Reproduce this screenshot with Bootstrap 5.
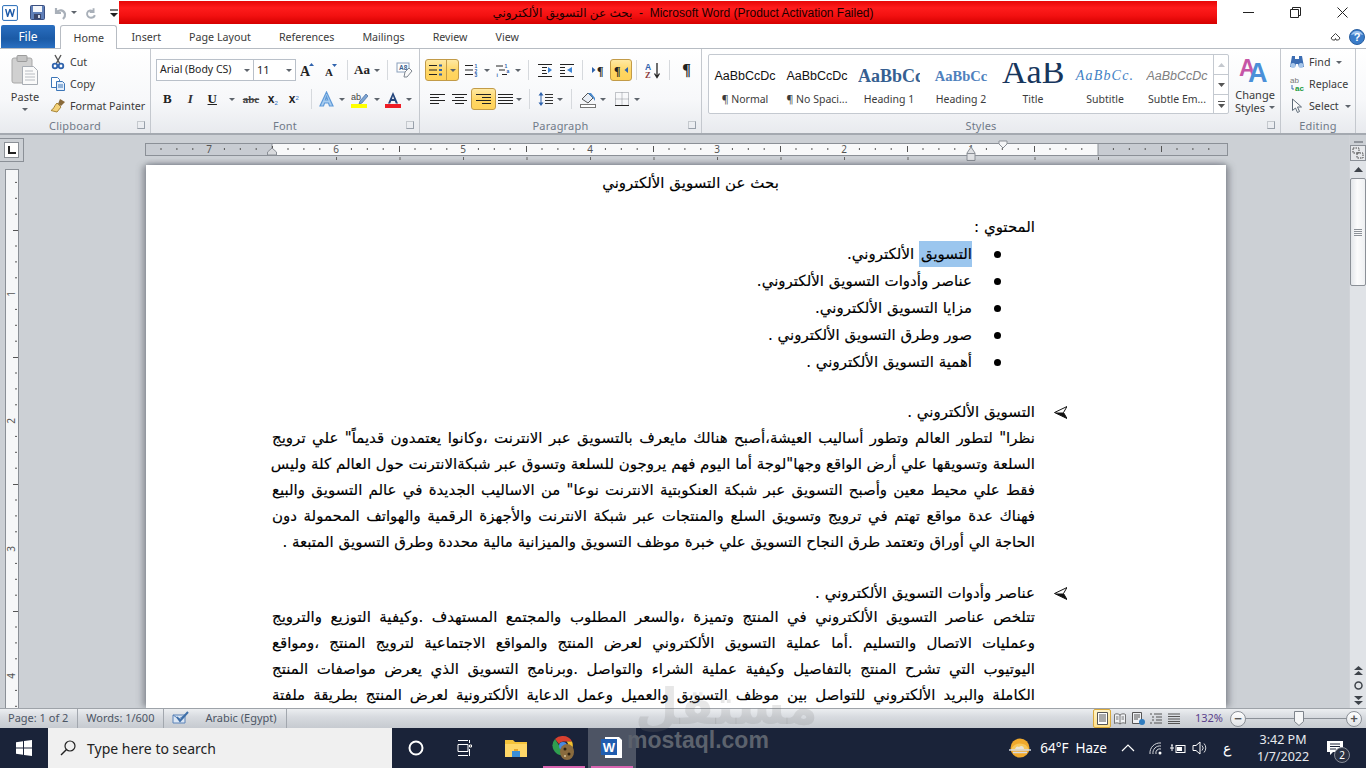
<!DOCTYPE html>
<html lang="en">
<head>
<meta charset="utf-8">
<title>Word</title>
<link href="https://cdn.jsdelivr.net/npm/bootstrap@5.3.0/dist/css/bootstrap.min.css" rel="stylesheet">
<style>
html,body{margin:0;height:768px;width:1366px;overflow:hidden;background:#fff}
body{font-family:"Noto Sans","Open Sans",sans-serif;font-size:11px;color:#3b3b3b;position:relative}
svg{display:block;flex:none}
.titlebar{height:25px;background:#fff}
.qat{width:119px;padding-left:2px}
.qsep{width:1px;height:15px;background:#9aa0a8}
.redbar{width:1098px;height:23px;margin-top:1px;padding-left:30px;background:linear-gradient(#e60808,#ff1c1c 30%,#f21010 65%,#d50000);color:#1a0000;font:12px "Liberation Sans","DejaVu Sans",sans-serif}
.wctl{flex:1;padding:0 18px 0 26px}
.tabrow{height:24px;border-bottom:1px solid #b7bcc3}
.filetab{width:54px;height:23px;margin:0 5px 0 1px;background:linear-gradient(#2a6fc0,#1b5aa6 60%,#2a70c2);color:#fff;font-size:12px;border-radius:2px 2px 0 0}
.wtab{padding:0 14px;height:24px;font-size:10.7px}
.wtab.on{background:#fff;border:1px solid #b7bcc3;border-bottom:0;border-radius:3px 3px 0 0;padding:0 12.5px;height:25px}
.helpbox{margin-left:auto;padding-right:1px}
.ribbon{height:86px;background:linear-gradient(#fff,#f7f8fa 60%,#e8eaee);border-bottom:2px solid #a4a9b0}
.rgroup{height:84px;border-right:1px solid #c4c8ce;padding-top:5px;position:relative}
.gl{position:absolute;left:0;right:0;top:69px;text-align:center;color:#707a88;font-size:11px;line-height:15px;letter-spacing:.2px}
.gl-st{padding-right:20px}
.launch{position:absolute;right:5px;top:72px;width:8px;height:8px;border:1px solid #98a0aa;border-top-color:#c5c9ce;border-left-color:#c5c9ce}
.g1{width:151px}.g2{width:269px}.g3{width:282px}.g4{width:579px}.g5{width:75px}
.paste{width:50px;padding-top:1px}
.pl{margin-top:4px;line-height:14px}
.caret-d{width:0;height:0;border-left:3px solid transparent;border-right:3px solid transparent;border-top:3px solid #5e646c}
.smallcol{margin-top:-3px}
.smallrow{height:22px;gap:2px;white-space:nowrap;font-size:10.7px}
.smallrow svg{margin-right:2px}
.combo{height:22px;background:#fff;border:1px solid #b9c0c9;color:#222;font-size:10.5px;padding:0 3px}
.c1{width:98px}.c2{width:43px;margin-left:-1px;font-size:11px}
.cell{height:22px;min-width:0}
.grid-f1{display:grid;grid-template-columns:98px 42px 22px 26px 6px 34px 6px 29px;align-items:center;margin:5px 0 0 5px;height:22px}
.grid-f2{display:grid;grid-template-columns:22.5px 23.5px 20.5px 18px 21px 22.5px 19.5px 16px 14.5px 16.5px 17.5px 17px 16.5px 15.5px;margin:7px 0 0 5px;height:22px}
.grid-p1{display:grid;grid-template-columns:35px 23px 8px 24px 6px 14px 20px 23px 8px 24px 22px 8px 25px 8px 27px;margin:5px 0 0 5px;height:22px}
.grid-p2{display:grid;grid-template-columns:22px 23px 25px 18px 10px 10px 3px 18px 9px 14px 20px 10px 4px 20px 10px;margin:7px 0 0 6px;height:22px}
.hot{background:linear-gradient(#ffe9a3,#ffd663 55%,#ffd25a);border:1px solid #c29b48;border-radius:3px}
.splitbtn{width:34px;height:22px;overflow:hidden}
.splitbtn>div{height:100%}
.splitbtn .sa{width:21px;border-right:1px solid #c29b48}
.splitbtn .sb{flex:1}
.vsep{width:1px;height:20px;background:#d6d9dd}
.fb{font:700 13px "Liberation Serif",serif;color:#222}
.fi{font:italic 700 13px "Liberation Serif",serif;color:#333}
.fu{font:700 13px "Liberation Serif",serif;color:#222;text-decoration:underline}
.fs{font:700 11px "Liberation Serif",serif;color:#444;text-decoration:line-through}
.fx{font:700 12px "Liberation Sans",sans-serif;color:#222}
.fx sub,.fx sup{font-size:6px;color:#2b6fc0;font-weight:400}
.gallery{width:522px;height:60px;margin-left:6px;background:#fff;border:1px solid #c4c9d0;border-radius:2px}
.sty{width:72px;height:58px;overflow:hidden;text-align:center}
.spv{height:34px;width:62px;margin:0 auto;overflow:hidden;white-space:nowrap;color:#111}
.slb{font-size:10.5px;line-height:14px;margin-top:3px;white-space:nowrap}
.s0{font:12.5px/42px "Liberation Sans",sans-serif}
.s1{font:700 18px/42px "Liberation Serif",serif;color:#365f91}
.s2{font:700 14.5px/42px "Liberation Serif",serif;color:#4f81bd}
.s3{font:34px/17px "Liberation Serif",serif;color:#17365d;height:26px;margin-top:8px}
.s4{font:italic 14px/42px "Liberation Serif",serif;color:#3f7fc4;letter-spacing:1.2px}
.s5{font:italic 12.5px/42px "Liberation Sans",sans-serif;color:#808080}
.sroll{width:15px;margin-left:auto;border-left:1px solid #c4c9d0}
.sroll>div{height:20px;border-bottom:1px solid #c4c9d0}
.sroll>div:last-child{border-bottom:0;flex:1}
.chg{width:50px;margin-left:1px;text-align:center;line-height:13px}
.chg svg{margin:0 auto 4px}
.workspace{height:573px;background:#ccd0d5}
.vcol{width:24px}
.tabsel{width:24px;height:24px;margin-top:3px;border:1px solid #8b9097;border-left:0;padding:3px 4px 3px 4px}
.tabsel>div{background:#fff;border:1px solid #8b9097;height:100%}
.vrul{margin:7px 0 0 5px}
.midcol{width:1325px;padding-left:121px;overflow:hidden}
.pagewrap{padding-top:4px;height:100%}
.docpage{width:1080px;height:543px;margin-left:1px;background:#fff;box-shadow:-5px 0 6px -1px rgba(90,95,105,.45),5px 0 6px -1px rgba(90,95,105,.45),0 -2px 4px rgba(90,95,105,.35);padding:5px 191px 0 126px;color:#000;font:15px/26px "DejaVu Sans",sans-serif;direction:rtl;-webkit-text-stroke:.15px #000}
.doctitle{text-align:center;padding-left:74px;margin-bottom:18px}
.l27{line-height:27px}
.bulrow{display:flex}
.bulrow .mk{width:63px;flex:none;display:flex;align-items:center}
.dotb{width:7px;height:7px;border-radius:50%;background:#000;margin-right:34px}
.sel{background:#9bc6ee;display:inline-block;line-height:26px;padding-left:2px}
.hdrow{display:flex;margin-right:-32px}
.hdrow .mk{width:32px;flex:none;display:flex;align-items:center}
.just{text-align:justify;text-align-last:justify;white-space:nowrap}
.tight{margin-top:-2px}
.m23{margin-top:23px}.m25{margin-top:25px}
.sbar{width:17px;background:#e0e3e7;border-left:1px solid #d0d3d8}
.sbtop{height:10px;background:#ccd0d5;padding-top:6px}
.sbtop i{display:block;width:9px;height:2px;margin:0 auto;background:#90959c}
.sbv{width:16px;height:16px;background:#e6e8eb;border:1px solid #8b9097}
.sup{height:17px}
.thumb{height:108px;background:linear-gradient(90deg,#e3e6ea,#fbfbfc 45%,#eef0f2);border:1px solid #8b9097;border-radius:2px;width:16px}
.sbbot{margin-top:auto;gap:6px;padding-bottom:3px}
.status{height:20px;background:linear-gradient(#eceef1,#d8dbe0 40%,#c6cad0);border-top:1px solid #9ea3a9;color:#4c5564;font-size:11px}
.st{padding:0 9px 0 8px;height:19px;border-right:1px solid #a2a7ae;white-space:nowrap}
.vw{width:18px;height:19px}
.vw.on{background:linear-gradient(#fff3c8,#ffe08a);border:1px solid #d9a93c;border-radius:2px}
.zoomtxt{color:#5a3f8c;width:42px;text-align:center;margin-left:5px}
.zb{width:16px;height:16px;border-radius:50%;border:1px solid #8b9097;background:linear-gradient(#fff,#dfe2e6);font:700 13px/13px "Liberation Sans",sans-serif;text-align:center;color:#555}
.ztrack{width:102px;height:1px;background:#8b9097;position:relative;margin:0 -1px}
.zthumb{position:absolute;left:49px;top:-7px}
.taskbar{height:40px;background:#1a2339;color:#fff}
.startb{width:48px}
.searchb{width:344px;height:40px;background:#f0f0f0;color:#222;font-size:14px;padding-left:12px;gap:11px}
.tbi{width:48px;height:40px;position:relative}
.tbi.pk::after{content:"";position:absolute;left:3px;right:3px;bottom:0;height:2px;background:#d864b0}
.tbi.act{background:#4d5464}
.tray{margin-left:auto;font-size:13.5px;white-space:nowrap;padding-right:11px}
.t9{margin-left:9px}.t14{margin-left:14px}.t13{margin-left:13px}.t8{margin-left:8px}.t6{margin-left:6px}.t15{margin-left:15px}
.clock{width:64px;margin-left:20px;text-align:center;line-height:17px;font-size:12.5px;color:#e8eaee}
.notif{position:relative;width:40px}
.nbad{position:absolute;left:19px;top:7px;width:16px;height:16px;border-radius:50%;background:#2a3142;border:1px solid #888d98;font-size:10px;line-height:14px;text-align:center;color:#fff}
.wm1{position:absolute;left:635px;top:682px;font:700 50px/50px "DejaVu Sans",sans-serif;color:rgba(120,120,120,.18);pointer-events:none;direction:rtl}
.wm2{position:absolute;left:627px;top:726px;font:700 23px/28px "Liberation Sans",sans-serif;color:#5c626d;pointer-events:none}
</style>
</head>
<body>
<div class="d-flex flex-column">

<!-- title bar -->
<div class="titlebar d-flex">
  <div class="qat d-flex align-items-center">
    <svg width="16" height="16" viewBox="0 0 16 16"><rect x=".5" y=".5" width="15" height="15" rx="1.5" fill="#e8f1fb" stroke="#3a78bd"/><rect x="2" y="2" width="12" height="12" fill="#fff"/><path d="M3 4l2 8h1.2L8 6.5 9.800 12H11l2-8h-1.500L10.400 9 8.700 4H7.300L5.600 9 4.500 4z" fill="#1d5aa8"/></svg>
    <div class="qsep ms-1 me-2"></div>
    <svg width="15" height="15" viewBox="0 0 15 15"><rect x=".5" y=".5" width="14" height="14" rx="1" fill="#5f7fb8" stroke="#3a4f80"/><rect x="3" y="1" width="9" height="6" fill="#f4f6fa"/><rect x="4" y="9" width="7" height="5" fill="#39456a"/><rect x="8" y="10" width="2" height="3" fill="#cfd6e6"/></svg>
    <svg class="ms-2" width="14" height="14" viewBox="0 0 14 14"><path d="M3 2v5h5M3.500 6.500C6 3 11 4 12 8c.4 2-.5 3.500-2 5" fill="none" stroke="#a9b0b9" stroke-width="2.200"/></svg>
    <div class="caret-d ms-1"></div>
    <svg class="ms-2" width="12" height="14" viewBox="0 0 14 14"><path d="M10 1.500v4.500H5.500M10 6C8 3 3.500 3.500 2.500 7c-.6 3 1.500 5.500 4.500 5.500 2.500 0 4-1.500 4.500-3" fill="none" stroke="#a9b0b9" stroke-width="2.200"/></svg>
    <div class="qsep ms-2"></div>
    <svg class="ms-1" width="10" height="10" viewBox="0 0 10 10"><path d="M1 2h8" stroke="#222" stroke-width="1.200"/><path d="M1 5h8L5 9z" fill="#222"/></svg>
  </div>
  <div class="redbar d-flex align-items-center justify-content-center"><span dir="ltr"><span dir="rtl">بحث عن التسويق الألكتروني</span> &nbsp;-&nbsp; Microsoft Word (Product Activation Failed)</span></div>
  <div class="wctl d-flex align-items-center justify-content-between">
    <svg width="11" height="11" viewBox="0 0 11 11"><path d="M0 5.500h11" stroke="#222"/></svg>
    <svg width="11" height="11" viewBox="0 0 11 11"><path d="M.5 2.500h8v8h-8zM2.500 2.500v-2h8v8h-2" fill="none" stroke="#222"/></svg>
    <svg width="11" height="11" viewBox="0 0 11 11"><path d="M.5.500l10 10M10.500.500l-10 10" stroke="#222"/></svg>
  </div>
</div>

<!-- tabs -->
<div class="tabrow d-flex align-items-start">
  <div class="filetab d-flex align-items-center justify-content-center">File</div>
  <div class="wtab on d-flex align-items-center">Home</div>
  <div class="wtab d-flex align-items-center">Insert</div>
  <div class="wtab d-flex align-items-center">Page Layout</div>
  <div class="wtab d-flex align-items-center">References</div>
  <div class="wtab d-flex align-items-center">Mailings</div>
  <div class="wtab d-flex align-items-center">Review</div>
  <div class="wtab d-flex align-items-center">View</div>
  <div class="helpbox d-flex align-items-center gap-2 h-100">
    <svg width="11" height="9" viewBox="0 0 11 9"><path d="M1 6l4.500-4.500L10 6 8.500 8H6L5.500 6.500 5 8H2.500z" fill="none" stroke="#444"/></svg>
    <svg width="16" height="16" viewBox="0 0 16 16"><circle cx="8" cy="8" r="7.500" fill="#3a7cc9" stroke="#2a5f9f"/><path d="M2 6a6.500 6.500 0 0 1 12 0c-3-1.500-9-1.500-12 0z" fill="#9cc3ee"/><text x="8" y="12" text-anchor="middle" font-family="Liberation Sans" font-weight="700" font-size="11" fill="#fff">?</text></svg>
  </div>
</div>

<!-- ribbon -->
<div class="ribbon d-flex">
  <div class="rgroup g1 d-flex">
    <div class="paste d-flex flex-column align-items-center">
      <svg width="28" height="31" viewBox="0 0 28 31"><rect x="1" y="3" width="20" height="25" rx="2" fill="#d0d0d0" stroke="#a8a8a8"/><rect x="6" y="0.500" width="10" height="6" rx="1" fill="#c4c4c4" stroke="#9c9c9c"/><path d="M11.500 11.500h11l4 4v14h-15z" fill="#fafafa" stroke="#a8adb4"/><path d="M14 16h8M14 19h10M14 22h10M14 25h10" stroke="#b8bcc2"/></svg>
      <div class="pl">Paste</div>
      <div class="caret-d mt-1"></div>
    </div>
    <div class="smallcol d-flex flex-column">
      <div class="smallrow d-flex align-items-center"><svg width="16" height="16" viewBox="0 0 16 16"><path d="M5 1l5 9M11 1L6 10" stroke="#555" stroke-width="1.400"/><circle cx="5" cy="12" r="2.300" fill="none" stroke="#2f63ad" stroke-width="1.800"/><circle cx="11" cy="12" r="2.300" fill="none" stroke="#2f63ad" stroke-width="1.800"/></svg><span>Cut</span></div>
      <div class="smallrow d-flex align-items-center"><svg width="16" height="16" viewBox="0 0 16 16"><path d="M1.500 1.500h6l2 2v8h-8z" fill="#fff" stroke="#3c76b8"/><path d="M6.500 5.500h6l2 2v7h-8z" fill="#e4eefa" stroke="#3c76b8"/><path d="M8 9h5M8 11h5" stroke="#3c76b8"/></svg><span>Copy</span></div>
      <div class="smallrow d-flex align-items-center"><svg width="16" height="16" viewBox="0 0 16 16"><path d="M10 1l5 3-4 4-3-2z" fill="#8a6a3a"/><path d="M7 5l4 4-4 5-6-1.500C4 11 4 8 7 5z" fill="#f4d27a" stroke="#a78436"/></svg><span>Format Painter</span></div>
    </div>
    <div class="gl">Clipboard</div><div class="launch"></div>
  </div>

  <div class="rgroup g2">
    <div class="grid-f1">
      <div class="combo c1 d-flex align-items-center justify-content-between"><span>Arial (Body CS)</span><span class="caret-d"></span></div>
      <div class="combo c2 d-flex align-items-center justify-content-between"><span>11</span><span class="caret-d"></span></div>
      <div class="cell d-flex align-items-center justify-content-center"><svg width="14" height="14" viewBox="0 0 14 14"><text x="0" y="13" font-family="Liberation Serif" font-weight="700" font-size="14" fill="#222">A</text><path d="M9 3l2.500-3L14 3z" fill="#2f63ad"/></svg></div>
      <div class="cell d-flex align-items-center justify-content-center"><svg width="13" height="14" viewBox="0 0 13 14"><text x="0" y="13" font-family="Liberation Serif" font-weight="700" font-size="11" fill="#222">A</text><path d="M7 1l2.500 3L12 1z" fill="#2f63ad"/></svg></div>
      <div class="cell d-flex align-items-center justify-content-center"><div class="vsep"></div></div>
      <div class="cell d-flex align-items-center justify-content-center gap-1 fb">Aa<span class="caret-d"></span></div>
      <div class="cell d-flex align-items-center justify-content-center"><div class="vsep"></div></div>
      <div class="cell d-flex align-items-center justify-content-center"><svg width="17" height="17" viewBox="0 0 17 17"><rect x="1" y="1" width="12" height="9" fill="#fff" stroke="#8aa0bb"/><text x="3" y="8" font-family="Liberation Sans" font-size="6.500" font-weight="700" fill="#3a5f8e">A8</text><path d="M9 10l4-4 3 3-5 6H8z" fill="#fafafa" stroke="#7f8790"/></svg></div>
    </div>
    <div class="grid-f2">
      <div class="cell d-flex align-items-center justify-content-center fb">B</div>
      <div class="cell d-flex align-items-center justify-content-center fi">I</div>
      <div class="cell d-flex align-items-center justify-content-center fu">U</div>
      <div class="cell d-flex align-items-center justify-content-center"><span class="caret-d"></span></div>
      <div class="cell d-flex align-items-center justify-content-center fs">abc</div>
      <div class="cell d-flex align-items-center justify-content-center fx"><span>x<sub>2</sub></span></div>
      <div class="cell d-flex align-items-center justify-content-center fx"><span>x<sup>2</sup></span></div>
      <div class="cell d-flex align-items-center justify-content-center"><div class="vsep"></div></div>
      <div class="cell d-flex align-items-center justify-content-center"><svg width="15" height="16" viewBox="0 0 15 16"><path d="M7.500 1L1 15h3.500l1-3h4l1 3H14zM6.300 9l1.200-3.500L8.700 9z" fill="#a9cdf0" stroke="#5f9ad8" stroke-width="1.200"/></svg></div>
      <div class="cell d-flex align-items-center justify-content-center"><span class="caret-d"></span></div>
      <div class="cell d-flex align-items-center justify-content-center"><svg width="17" height="17" viewBox="0 0 17 17"><text x="0" y="9" font-family="Liberation Sans" font-size="9" fill="#444">ab</text><path d="M9 10l6-7 2 2-6 7-3 1z" fill="#7ba4d4" stroke="#46699a" stroke-width=".7"/><rect x="0" y="13" width="16" height="4" fill="#ffff00"/></svg></div>
      <div class="cell d-flex align-items-center justify-content-center"><span class="caret-d"></span></div>
      <div class="cell d-flex align-items-center justify-content-center"><svg width="16" height="17" viewBox="0 0 16 17"><path d="M8 1L3 12.500h2.200l1-2.500h3.600l1 2.500H13zM7 8l1-3 1 3z" fill="#24467c"/><rect y="13" width="16" height="4" fill="#ee1c25"/></svg></div>
      <div class="cell d-flex align-items-center justify-content-center"><span class="caret-d"></span></div>
    </div>
    <div class="gl">Font</div><div class="launch"></div>
  </div>

  <div class="rgroup g3">
    <div class="grid-p1">
      <div class="cell d-flex align-items-center"><div class="splitbtn hot d-flex"><div class="sa d-flex align-items-center justify-content-center"><svg width="16" height="14" viewBox="0 0 16 14"><path d="M1 2.500h8M1 7h8M1 11.500h8" stroke="#222"/><path d="M11 1.500h3v2h-3zM11 6h3v2h-3zM11 10.500h3v2h-3z" fill="#2f63ad"/></svg></div><div class="sb d-flex align-items-center justify-content-center"><span class="caret-d"></span></div></div></div>
      <div class="cell d-flex align-items-center justify-content-center"><svg width="16" height="14" viewBox="0 0 16 14"><path d="M1 2.500h8M1 7h8M1 11.500h8" stroke="#222"/><text x="10.500" y="5" font-size="5" font-family="Liberation Sans" font-weight="700" fill="#2f63ad">1</text><text x="10.500" y="9.500" font-size="5" font-family="Liberation Sans" font-weight="700" fill="#2f63ad">2</text><text x="10.500" y="14" font-size="5" font-family="Liberation Sans" font-weight="700" fill="#2f63ad">3</text></svg></div>
      <div class="cell d-flex align-items-center justify-content-center"><span class="caret-d"></span></div>
      <div class="cell d-flex align-items-center justify-content-center"><svg width="17" height="14" viewBox="0 0 17 14"><path d="M1 3h7M4 7h6M7 11.500h5" stroke="#222"/><text x="9.500" y="5" font-size="5" font-family="Liberation Sans" font-weight="700" fill="#2f63ad">1</text><text x="11.500" y="9.500" font-size="5" font-family="Liberation Sans" font-weight="700" fill="#2f63ad">a</text><text x="1.500" y="14" font-size="5" font-family="Liberation Sans" font-weight="700" fill="#2f63ad">i</text></svg></div>
      <div class="cell d-flex align-items-center justify-content-center"><span class="caret-d"></span></div>
      <div class="cell d-flex align-items-center justify-content-center"><div class="vsep"></div></div>
      <div class="cell d-flex align-items-center justify-content-center"><svg width="16" height="14" viewBox="0 0 16 14"><path d="M1 1.500h14M5 4.500h5M5 7.500h4M5 10.500h5M1 13.500h14" stroke="#222"/><path d="M15 7l-4-3v6z" fill="#3f85d4"/></svg></div>
      <div class="cell d-flex align-items-center justify-content-center"><svg width="16" height="14" viewBox="0 0 16 14"><path d="M1 1.500h14M1 4.500h5M1 7.500h5M1 10.500h5M1 13.500h14" stroke="#222"/><path d="M8 7l5-3v6z" fill="#3f85d4"/></svg></div>
      <div class="cell d-flex align-items-center justify-content-center"><div class="vsep"></div></div>
      <div class="cell d-flex align-items-center justify-content-center"><svg width="15" height="13" viewBox="0 0 15 13"><path d="M1 3l3.500 3L1 9z" fill="#2f63ad"/><text x="6" y="11" font-size="12" font-family="Liberation Serif" font-weight="700" fill="#222">¶</text></svg></div>
      <div class="cell hot d-flex align-items-center justify-content-center"><svg width="15" height="13" viewBox="0 0 15 13"><text x="0" y="11" font-size="12" font-family="Liberation Serif" font-weight="700" fill="#222">¶</text><path d="M14 3l-3.500 3L14 9z" fill="#2f63ad"/></svg></div>
      <div class="cell d-flex align-items-center justify-content-center"><div class="vsep"></div></div>
      <div class="cell d-flex align-items-center justify-content-center"><svg width="16" height="17" viewBox="0 0 16 17"><text x="0" y="8" font-size="8.500" font-family="Liberation Sans" font-weight="700" fill="#2f63ad">A</text><text x="0" y="16" font-size="8.500" font-family="Liberation Serif" font-weight="700" fill="#8b3a3a">Z</text><path d="M12 1v13M9.500 11.500L12 15.500l2.500-4" fill="none" stroke="#222" stroke-width="1.300"/></svg></div>
      <div class="cell d-flex align-items-center justify-content-center"><div class="vsep"></div></div>
      <div class="cell d-flex align-items-center justify-content-center"><span class="fb fs-6">¶</span></div>
    </div>
    <div class="grid-p2">
      <div class="cell d-flex align-items-center justify-content-center"><svg width="15" height="13" viewBox="0 0 15 13"><path d="M0 1.500h15M0 4.500h9M0 7.500h15M0 10.500h9" stroke="#222"/></svg></div>
      <div class="cell d-flex align-items-center justify-content-center"><svg width="15" height="13" viewBox="0 0 15 13"><path d="M0 1.500h15M3 4.500h9M0 7.500h15M3 10.500h9" stroke="#222"/></svg></div>
      <div class="cell hot d-flex align-items-center justify-content-center"><svg width="15" height="13" viewBox="0 0 15 13"><path d="M0 1.500h15M6 4.500h9M0 7.500h15M6 10.500h9" stroke="#222"/></svg></div>
      <div class="cell d-flex align-items-center justify-content-center"><svg width="15" height="13" viewBox="0 0 15 13"><path d="M0 1.500h15M0 4.500h15M0 7.500h15M0 10.500h15" stroke="#222"/></svg></div>
      <div class="cell d-flex align-items-center justify-content-center"><span class="caret-d"></span></div>
      <div class="cell d-flex align-items-center justify-content-center"><div class="vsep"></div></div>
      <div></div>
      <div class="cell d-flex align-items-center justify-content-center"><svg width="16" height="16" viewBox="0 0 16 16"><path d="M3 1L.5 4.500h5zM3 15L.5 11.500h5z" fill="#2f63ad"/><path d="M3 4v8" stroke="#2f63ad"/><path d="M7 3.500h8M7 6.500h8M7 9.500h8M7 12.500h8" stroke="#333"/></svg></div>
      <div class="cell d-flex align-items-center justify-content-center"><span class="caret-d"></span></div>
      <div class="cell d-flex align-items-center justify-content-center"><div class="vsep"></div></div>
      <div class="cell d-flex align-items-center justify-content-center"><svg width="17" height="17" viewBox="0 0 17 17"><path d="M2 8l6-6 5 5-5 5z" fill="#e9eef5" stroke="#555"/><path d="M8 2l5 5 2 3v-3l-4-5z" fill="#4a8bd0"/><rect x="0.500" y="13.500" width="15" height="3" fill="#fff" stroke="#777"/></svg></div>
      <div class="cell d-flex align-items-center justify-content-center"><span class="caret-d"></span></div>
      <div></div>
      <div class="cell d-flex align-items-center justify-content-center"><svg width="14" height="14" viewBox="0 0 14 14"><path d="M.5.500h13v13H.500zM7 .5v13M.5 7h13" fill="none" stroke="#8a8f96" stroke-dasharray="1 1"/><path d="M0 13.500h14" stroke="#222"/></svg></div>
      <div class="cell d-flex align-items-center justify-content-center"><span class="caret-d"></span></div>
    </div>
    <div class="gl">Paragraph</div><div class="launch"></div>
  </div>

  <div class="rgroup g4">
    <div class="d-flex">
      <div class="gallery d-flex">
        <div class="sty"><div class="spv s0">AaBbCcDc</div><div class="slb">¶ Normal</div></div>
        <div class="sty"><div class="spv s0">AaBbCcDc</div><div class="slb">¶ No Spaci...</div></div>
        <div class="sty"><div class="spv s1">AaBbCc</div><div class="slb">Heading 1</div></div>
        <div class="sty"><div class="spv s2">AaBbCc</div><div class="slb">Heading 2</div></div>
        <div class="sty"><div class="spv s3">AaB</div><div class="slb">Title</div></div>
        <div class="sty"><div class="spv s4">AaBbCc.</div><div class="slb">Subtitle</div></div>
        <div class="sty"><div class="spv s5">AaBbCcDc</div><div class="slb">Subtle Em...</div></div>
        <div class="sroll d-flex flex-column">
          <div class="d-flex align-items-center justify-content-center"><svg width="7" height="4" viewBox="0 0 7 4"><path d="M0 4l3.500-4L7 4z" fill="#c4c8ce"/></svg></div>
          <div class="d-flex align-items-center justify-content-center"><svg width="7" height="4" viewBox="0 0 7 4"><path d="M0 0l3.500 4L7 0z" fill="#555"/></svg></div>
          <div class="d-flex align-items-center justify-content-center"><svg width="7" height="7" viewBox="0 0 7 7"><path d="M0 .5h7" stroke="#555"/><path d="M0 3l3.500 4L7 3z" fill="#555"/></svg></div>
        </div>
      </div>
      <div class="chg d-flex flex-column align-items-center">
        <svg width="32" height="30" viewBox="0 0 32 30"><text x="0" y="22" font-family="Liberation Sans" font-weight="700" font-size="23" fill="#c656a6">A</text><text x="9" y="28" font-family="Liberation Sans" font-weight="700" font-size="27" fill="#4a8fd8">A</text></svg>
        <div>Change</div>
        <div class="d-flex align-items-center gap-1">Styles<span class="caret-d"></span></div>
      </div>
    </div>
    <div class="gl gl-st">Styles</div><div class="launch"></div>
  </div>

  <div class="rgroup g5">
    <div class="smallcol d-flex flex-column ps-2">
      <div class="smallrow d-flex align-items-center"><svg width="16" height="16" viewBox="0 0 16 16"><path d="M3 2h3v3h4V2h3l2 11h-5l-1-3H7l-1 3H1z" fill="#3c6db3"/><circle cx="4" cy="11.500" r="2.500" fill="#a7c6ea"/><circle cx="12" cy="11.500" r="2.500" fill="#a7c6ea"/></svg><span>Find</span><span class="caret-d ms-1"></span></div>
      <div class="smallrow d-flex align-items-center"><svg width="16" height="16" viewBox="0 0 16 16"><text x="1" y="7" font-family="Liberation Sans" font-size="8" fill="#777">ab</text><text x="6" y="15" font-family="Liberation Sans" font-size="8" font-weight="700" fill="#1a9a3c">ac</text><path d="M3 9v4h2" fill="none" stroke="#3c6db3"/></svg><span>Replace</span></div>
      <div class="smallrow d-flex align-items-center"><svg width="16" height="16" viewBox="0 0 16 16"><path d="M3.500 1v11.500l3-2.500 2 4.500 2-1-2-4.500h4z" fill="#fafafa" stroke="#5d6a78"/></svg><span>Select</span><span class="caret-d ms-1"></span></div>
    </div>
    <div class="gl">Editing</div>
  </div>
</div>

<!-- workspace -->
<div class="workspace d-flex">
  <div class="vcol">
    <div class="tabsel"><div class="d-flex align-items-center justify-content-center"><svg width="8" height="8" viewBox="0 0 8 8"><path d="M1 0v7h7" fill="none" stroke="#222" stroke-width="2"/></svg></div></div>
    <svg class="vrul" width="14" height="540" viewBox="5 168 14 540">
      <defs><pattern id="vp" patternUnits="userSpaceOnUse" x="5" y="293" width="14" height="127"><path d="M5 15.400h2M5 31.300h2M5 47.200h2M5 79h2M5 94.900h2M5 110.800h2" transform="translate(5 0)" stroke="#555"/><path d="M8 63.500h6" stroke="#555"/></pattern></defs>
      <rect x="5.500" y="168.500" width="13" height="539" fill="#f6f7f8" stroke="#8b9097"/>
      <rect x="6" y="169" width="12" height="538" fill="url(#vp)"/>
      <text transform="translate(15 293) rotate(-90)" text-anchor="middle" font-family="Noto Sans" font-size="10" fill="#555">1</text>
      <text transform="translate(15 420) rotate(-90)" text-anchor="middle" font-family="Noto Sans" font-size="10" fill="#555">2</text>
      <text transform="translate(15 548) rotate(-90)" text-anchor="middle" font-family="Noto Sans" font-size="10" fill="#555">3</text>
      <text transform="translate(15 675) rotate(-90)" text-anchor="middle" font-family="Noto Sans" font-size="10" fill="#555">4</text>
    </svg>
  </div>
  <div class="midcol d-flex flex-column">
    <svg class="mt-1" width="1083" height="22" viewBox="145 139 1083 22">
      <defs>
        <pattern id="hp" patternUnits="userSpaceOnUse" x="209" y="143" width="127" height="13"><path d="M15.400 5v2M31.300 5v2M47.200 5v2M79 5v2M94.900 5v2M110.800 5v2" stroke="#555"/><path d="M63.500 3v6" stroke="#555"/></pattern>
        <pattern id="hq" patternUnits="userSpaceOnUse" x="209" y="156" width="63.500" height="5"><path d="M.5 1v3" stroke="#666"/></pattern>
      </defs>
      <rect x="145.500" y="143.500" width="1082" height="12" fill="#c8ccd2" stroke="#8b9097"/>
      <rect x="272" y="144" width="826" height="11" fill="#f8f9fa"/>
      <path d="M272 143v12M1098 143v12" stroke="#8b9097"/>
      <rect x="146" y="144" width="1081" height="11" fill="url(#hp)"/>
      <rect x="336" y="156" width="763" height="5" fill="url(#hq)"/>
      <g font-family="Noto Sans" font-size="10" fill="#555" text-anchor="middle"><text x="209" y="153">7</text><text x="336" y="153">6</text><text x="463" y="153">5</text><text x="590" y="153">4</text><text x="717" y="153">3</text><text x="844" y="153">2</text><text x="971" y="153">1</text></g>
      <path d="M267.500 155v-3l4.500-4 4.500 4v3z" fill="#d8dadd" stroke="#8b9097"/>
      <path d="M999 141h8v3l-4 4-4-4z" fill="#f4f5f6" stroke="#8b9097"/>
      <path d="M967 153l4-6 4 6v7.500h-8z" fill="#dfe1e4" stroke="#8b9097"/><path d="M967 153.500h8" stroke="#8b9097"/>
    </svg>
    <div class="pagewrap">
      <div class="docpage">
        <div class="doctitle">بحث عن التسويق الألكتروني</div>
        <div class="l27">المحتوي :</div>
        <div class="bulrow l27"><span class="mk"><i class="dotb"></i></span><span><span class="sel">التسويق</span> الألكتروني.</span></div>
        <div class="bulrow l27"><span class="mk"><i class="dotb"></i></span><span>عناصر وأدوات التسويق الألكتروني.</span></div>
        <div class="bulrow l27"><span class="mk"><i class="dotb"></i></span><span>مزايا التسويق الألكتروني.</span></div>
        <div class="bulrow l27"><span class="mk"><i class="dotb"></i></span><span>صور وطرق التسويق الألكتروني .</span></div>
        <div class="bulrow l27"><span class="mk"><i class="dotb"></i></span><span>أهمية التسويق الألكتروني .</span></div>
        <div class="hdrow m23"><span class="mk"><svg width="13" height="13" viewBox="0 0 13 13"><path d="M13 .5L.5 6.500 13 12.500 9.500 6.500z" fill="#fff" stroke="#111"/><path d="M13 12.500L.5 6.500h9z" fill="#111"/></svg></span><span>التسويق الألكتروني .</span></div>
        <div class="just">نظرا" لتطور العالم وتطور أساليب العيشة،أصبح هنالك مايعرف بالتسويق عبر الانترنت ،وكانوا يعتمدون قديماً" علي ترويج</div>
        <div class="just">السلعة وتسويقها علي أرض الواقع وجها"لوجة أما اليوم فهم يروجون للسلعة وتسوق عبر شبكةالانترنت حول العالم كلة وليس</div>
        <div class="just">فقط علي محيط معين وأصبح التسويق عبر شبكة العنكوبتية الانترنت نوعا" من الاساليب الجديدة في عالم التسويق والبيع</div>
        <div class="just">فهناك عدة مواقع تهتم في ترويج وتسويق السلع والمنتجات عبر شبكة الانترنت والأجهزة الرقمية والهواتف المحمولة دون</div>
        <div>الحاجة الي أوراق وتعتمد طرق النجاح التسويق علي خبرة موظف التسويق والميزانية مالية محددة وطرق التسويق المتبعة  .</div>
        <div class="hdrow m25"><span class="mk"><svg width="13" height="13" viewBox="0 0 13 13"><path d="M13 .5L.5 6.500 13 12.500 9.500 6.500z" fill="#fff" stroke="#111"/><path d="M13 12.500L.5 6.500h9z" fill="#111"/></svg></span><span>عناصر وأدوات التسويق الألكتروني .</span></div>
        <div class="just tight">تتلخص عناصر التسويق الألكتروني في المنتج وتميزة ،والسعر المطلوب والمجتمع المستهدف .وكيفية التوزيع والترويج</div>
        <div class="just">وعمليات الاتصال والتسليم .أما عملية التسويق الألكتروني لعرض المنتج والمواقع الاجتماعية لترويج المنتج ،ومواقع</div>
        <div class="just">اليوتيوب التي تشرح المنتج بالتفاصيل وكيفية عملية الشراء والتواصل .وبرنامج التسويق الذي يعرض مواصفات المنتج</div>
        <div class="just">الكاملة والبريد الألكتروني للتواصل بين موظف التسويق والعميل وعمل الدعاية الألكترونية لعرض المنتج بطريقة ملفتة</div>
      </div>
    </div>
  </div>
  <div class="sbar d-flex flex-column">
    <div class="sbtop"><i></i></div>
    <div class="sbv d-flex align-items-center justify-content-center"><svg width="12" height="12" viewBox="0 0 12 12"><path d="M1 1h6v5H1zM5 6h6v5H5z" fill="none" stroke="#444" stroke-dasharray="1.500 1"/></svg></div>
    <div class="sup d-flex align-items-center justify-content-center"><svg width="9" height="5" viewBox="0 0 9 5"><path d="M0 5l4.500-5L9 5z" fill="#3f444b"/></svg></div>
    <div class="thumb d-flex align-items-center justify-content-center"><svg width="8" height="7" viewBox="0 0 8 7"><path d="M0 .5h8M0 2.500h8M0 4.500h8M0 6.500h8" stroke="#8b9097"/></svg></div>
    <div class="sbbot d-flex flex-column align-items-center">
      <svg width="9" height="9" viewBox="0 0 9 9"><path d="M0 4l4.500-4L9 4zM0 9l4.500-4L9 9z" fill="#3f444b"/></svg>
      <svg width="9" height="9" viewBox="0 0 9 9"><circle cx="4.500" cy="4.500" r="3.500" fill="none" stroke="#3f444b" stroke-width="1.500"/></svg>
      <svg width="9" height="9" viewBox="0 0 9 9"><path d="M0 0l4.500 4L9 0zM0 5l4.500 4L9 5z" fill="#3f444b"/></svg>
    </div>
  </div>
</div>

<!-- status bar -->
<div class="status d-flex align-items-center">
  <div class="st d-flex align-items-center">Page: 1 of 2</div>
  <div class="st d-flex align-items-center">Words: 1/600</div>
  <div class="st d-flex align-items-center gap-3"><svg width="17" height="15" viewBox="0 0 17 15"><path d="M1 4h12v8H1z" fill="#dbe6f4" stroke="#5a83b8"/><path d="M1 4l6 4 6-4" fill="none" stroke="#5a83b8"/><path d="M5 6l3 4 8-9" fill="none" stroke="#3f6fa8" stroke-width="2"/></svg><span>Arabic (Egypt)</span></div>
  <div class="ms-auto d-flex align-items-center">
    <div class="vw on d-flex align-items-center justify-content-center"><svg width="11" height="13" viewBox="0 0 11 13"><path d="M.5.500h10v12H.5z" fill="#fff" stroke="#555"/><path d="M2 3h7M2 5h7M2 7h7M2 9h7" stroke="#555"/></svg></div>
    <div class="vw d-flex align-items-center justify-content-center"><svg width="12" height="12" viewBox="0 0 12 12"><path d="M6 2C4 .5 2 .5.500 1.500v9C2 9.500 4 9.500 6 11c2-1.500 4-1.500 5.500-.5v-9C10 .5 8 .5 6 2zM6 2v9M2 4h2.500M2 6h2.500M7.500 4H10M7.500 6H10" fill="#eef0f3" stroke="#555" stroke-width=".8"/></svg></div>
    <div class="vw d-flex align-items-center justify-content-center"><svg width="13" height="13" viewBox="0 0 13 13"><path d="M.5.500h9v11H.5z" fill="#eef0f3" stroke="#555"/><path d="M2 3h6M2 5h6M2 7h4" stroke="#555"/><circle cx="10" cy="10" r="3" fill="#2f7cc0"/></svg></div>
    <div class="vw d-flex align-items-center justify-content-center"><svg width="12" height="11" viewBox="0 0 12 11"><path d="M0 1h2M4 1h8M2 4h2M6 4h6M2 7h2M6 7h6M0 10h2M4 10h8" stroke="#555"/></svg></div>
    <div class="vw d-flex align-items-center justify-content-center"><svg width="12" height="11" viewBox="0 0 12 11"><path d="M0 1h12M0 3.500h12M0 6h12M0 8.500h12M0 10.500h12" stroke="#555"/></svg></div>
    <div class="zoomtxt">132%</div>
    <div class="zb">−</div>
    <div class="ztrack"><svg class="zthumb" width="10" height="15" viewBox="0 0 10 15"><path d="M.5.500h9v10L5 14.500.5 10.500z" fill="#f5f6f7" stroke="#7e848c"/></svg></div>
    <div class="zb me-1">+</div>
  </div>
</div>

<!-- taskbar -->
<div class="taskbar d-flex align-items-center">
  <div class="startb d-flex justify-content-center"><svg width="16" height="16" viewBox="0 0 16 16"><path d="M0 2.200l7-1v6.300H0zM8 1l8-1v7.500H8zM0 8.500h7v6.300l-7-1zM8 8.500h8V16l-8-1z" fill="#fff"/></svg></div>
  <div class="searchb d-flex align-items-center"><svg width="16" height="16" viewBox="0 0 16 16"><circle cx="10" cy="6" r="5" fill="none" stroke="#222" stroke-width="1.200"/><path d="M6.500 9.500L1 15" stroke="#222" stroke-width="1.400"/></svg><span>Type here to search</span></div>
  <div class="tbi d-flex align-items-center justify-content-center"><svg width="16" height="16" viewBox="0 0 16 16"><circle cx="8" cy="8" r="6.500" fill="none" stroke="#fff" stroke-width="2"/></svg></div>
  <div class="tbi d-flex align-items-center justify-content-center"><svg width="16" height="16" viewBox="0 0 16 16"><path d="M2 .5h10M2 15.500h10M2 4.500h10v7H2z" fill="none" stroke="#fff"/><path d="M13.500 0v3M13.500 5h2v2h-2zM13.500 9v7" stroke="#fff"/></svg></div>
  <div class="tbi d-flex align-items-center justify-content-center ms-1"><svg width="22" height="20" viewBox="0 0 22 20"><path d="M0 2h8l2 2h12v15H0z" fill="#f5c33b"/><path d="M0 6h22v13H0z" fill="#ffd768"/><path d="M7 13h8v6H7z" fill="#3b8fd6"/><path d="M9 11h4v2H9z" fill="#e6a52a"/></svg></div>
  <div class="tbi pk d-flex align-items-center justify-content-center"><svg width="24" height="26" viewBox="0 0 24 26"><path d="M11 1a10 10 0 0 1 9 5.500H11a4.500 4.500 0 0 0-4 2.500L3 4a10 10 0 0 1 8-3z" fill="#d9402f"/><path d="M3 4l5 8 3 8.500A10 10 0 0 1 3 4z" fill="#2f9e4f"/><path d="M20 6.500a10 10 0 0 1-9 14l4-8a4.500 4.500 0 0 0-.5-6z" fill="#f3c02e"/><circle cx="11" cy="11" r="4" fill="#4a88e0"/><ellipse cx="15" cy="17" rx="7" ry="8" fill="#8a6b3e"/><circle cx="13" cy="14" r="1.500" fill="#2c2112"/><circle cx="17" cy="19" r="1.500" fill="#2c2112"/><circle cx="13" cy="21" r="1" fill="#d9c79d"/></svg></div>
  <div class="tbi act pk d-flex align-items-center justify-content-center"><svg width="24" height="24" viewBox="0 0 24 24"><path d="M5 1h14l3 3v18H5z" fill="#fff"/><rect x="1" y="3" width="16" height="16" fill="#1f5db0"/><text x="9" y="16" text-anchor="middle" font-family="Liberation Sans" font-weight="700" font-size="13" fill="#fff">W</text></svg></div>
  <div class="tray d-flex align-items-center">
    <svg width="22" height="22" viewBox="0 0 22 22"><circle cx="11" cy="11" r="9.500" fill="#f0a92c"/><path d="M2 13a9.500 9.500 0 0 1 18 0z" fill="#f7c75a"/><path d="M0 13h22M4 15.500h14" stroke="#d8dce2" stroke-width="1.600"/><path d="M6 12c1-3 3-3 4-2 2-2 5-1 5 2z" fill="#e8e4d8"/></svg>
    <span class="t9">64°F&nbsp; Haze</span>
    <svg class="t14" width="14" height="8" viewBox="0 0 14 8"><path d="M1 7l6-6 6 6" fill="none" stroke="#fff" stroke-width="1.200"/></svg>
    <svg class="t13" width="14" height="14" viewBox="0 0 14 14"><path d="M2 13a10 10 0 0 1 11-11M5 13a7 7 0 0 1 8-8M8 13a4 4 0 0 1 5-5" fill="none" stroke="#d6d8dc"/><circle cx="12" cy="12" r="1.500" fill="#fff"/></svg>
    <svg class="t8" width="16" height="11" viewBox="0 0 16 11"><rect x="6" y="2.500" width="9" height="7" fill="none" stroke="#fff"/><rect x="7" y="4" width="5" height="4" fill="#fff"/><path d="M0 5h4M2 2v6M1 2h2" stroke="#fff"/></svg>
    <svg class="t6" width="16" height="14" viewBox="0 0 16 14"><path d="M1 4.500h3L8 1v12L4 9.500H1z" fill="none" stroke="#fff"/><path d="M10 4.500a3.500 3.500 0 0 1 0 5M12 2.500a6.500 6.500 0 0 1 0 9" fill="none" stroke="#d6d8dc"/></svg>
    <span class="t15" dir="rtl">ع</span>
    <div class="clock"><div>3:42 PM</div><div>1/7/2022</div></div>
    <div class="notif d-flex justify-content-center"><svg width="16" height="16" viewBox="0 0 16 16"><path d="M0 1h16v11H6l-3 3v-3H0z" fill="#fff"/><path d="M3 4h10M3 6.500h10M3 9h6" stroke="#1a2339"/></svg><div class="nbad">2</div></div>
  </div>
</div>
</div>

<div class="wm1">مستقل</div>
<div class="wm2">mostaql.com</div>
</body>
</html>
